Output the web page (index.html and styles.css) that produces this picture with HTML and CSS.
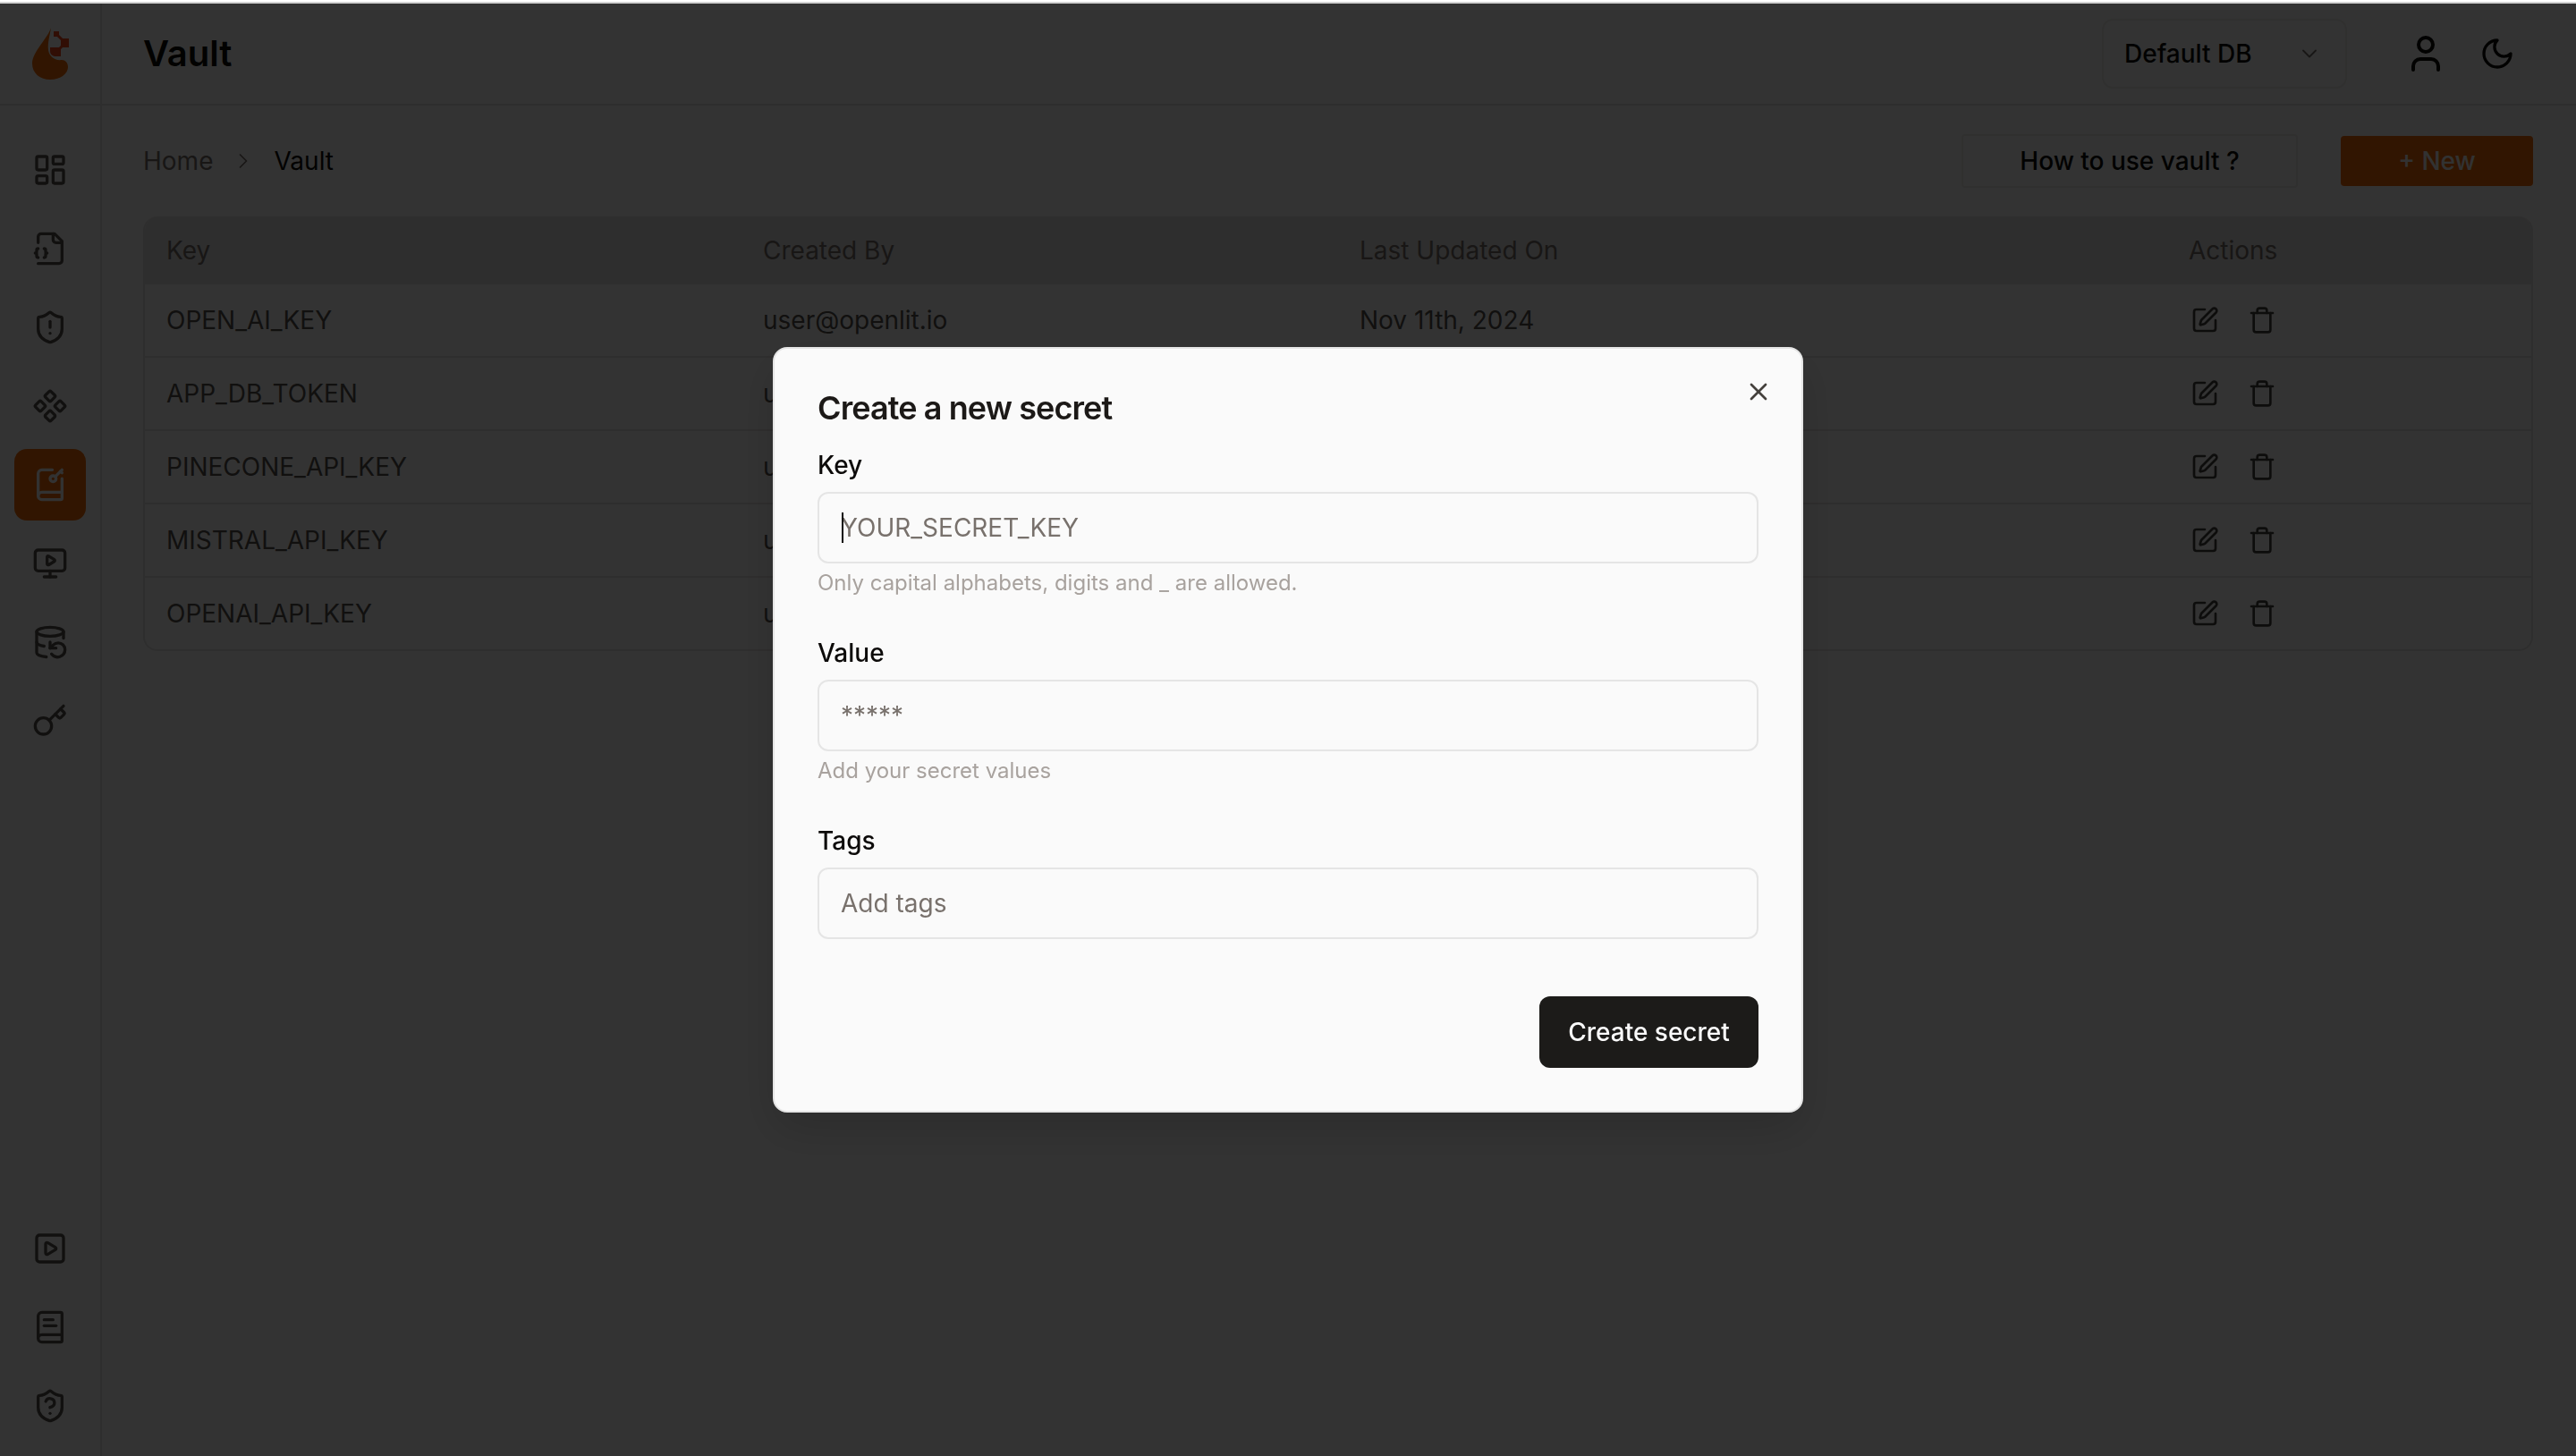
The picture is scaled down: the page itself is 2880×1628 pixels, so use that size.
FILE: index.html
```html
<!DOCTYPE html>
<html lang="en">
<head>
<meta charset="utf-8">
<title>Vault</title>
<link rel="stylesheet" href="styles.css">
</head>
<body>
<svg class="defs" width="0" height="0" aria-hidden="true">
  <symbol id="i-dash" viewBox="0 0 24 24"><rect width="7" height="9" x="3" y="3" rx="1"/><rect width="7" height="5" x="14" y="3" rx="1"/><rect width="7" height="9" x="14" y="12" rx="1"/><rect width="7" height="5" x="3" y="16" rx="1"/></symbol>
  <symbol id="i-file" viewBox="0 0 24 24"><path d="M4 22h14a2 2 0 0 0 2-2V7l-5-5H6a2 2 0 0 0-2 2v4"/><path d="M14 2v4a2 2 0 0 0 2 2h4"/><path d="M4 12a1 1 0 0 0-1 1v1a1 1 0 0 1-1 1 1 1 0 0 1 1 1v1a1 1 0 0 0 1 1"/><path d="M8 18a1 1 0 0 0 1-1v-1a1 1 0 0 1 1-1 1 1 0 0 1-1-1v-1a1 1 0 0 0-1-1"/></symbol>
  <symbol id="i-shield-alert" viewBox="0 0 24 24"><path d="M20 13c0 5-3.5 7.5-7.66 8.95a1 1 0 0 1-.67-.01C7.5 20.5 4 18 4 13V6a1 1 0 0 1 1-1c2 0 4.5-1.2 6.24-2.72a1.17 1.17 0 0 1 1.52 0C14.51 3.81 17 5 19 5a1 1 0 0 1 1 1z"/><path d="M12 8v4"/><path d="M12 16h.01"/></symbol>
  <symbol id="i-component" viewBox="0 0 24 24"><path d="M15.536 11.293a1 1 0 0 0 0 1.414l2.376 2.377a1 1 0 0 0 1.414 0l2.377-2.377a1 1 0 0 0 0-1.414l-2.377-2.377a1 1 0 0 0-1.414 0z"/><path d="M2.297 11.293a1 1 0 0 0 0 1.414l2.377 2.377a1 1 0 0 0 1.414 0l2.377-2.377a1 1 0 0 0 0-1.414L6.088 8.916a1 1 0 0 0-1.414 0z"/><path d="M8.916 17.912a1 1 0 0 0 0 1.415l2.377 2.376a1 1 0 0 0 1.414 0l2.377-2.376a1 1 0 0 0 0-1.415l-2.377-2.376a1 1 0 0 0-1.414 0z"/><path d="M8.916 4.674a1 1 0 0 0 0 1.414l2.377 2.376a1 1 0 0 0 1.414 0l2.377-2.376a1 1 0 0 0 0-1.414l-2.377-2.377a1 1 0 0 0-1.414 0z"/></symbol>
  <symbol id="i-book-key" viewBox="0 0 24 24"><path d="m19 3 1 1"/><path d="m20 2-4.5 4.5"/><path d="M20 7.898V21a1 1 0 0 1-1 1H6.5a1 1 0 0 1 0-5H20"/><path d="M4 19.5v-15A2.5 2.5 0 0 1 6.5 2h7"/><circle cx="14" cy="8" r="2"/></symbol>
  <symbol id="i-monitor" viewBox="0 0 24 24"><path d="M10 7.75a.75.75 0 0 1 1.142-.638l3.664 2.249a.75.75 0 0 1 0 1.278l-3.664 2.25a.75.75 0 0 1-1.142-.64z"/><path d="M12 17v4"/><path d="M8 21h8"/><rect x="2" y="3" width="20" height="14" rx="2"/></symbol>
  <symbol id="i-db" viewBox="0 0 24 24"><ellipse cx="12" cy="5" rx="9" ry="3"/><path d="M3 12a9 3 0 0 0 5 2.69"/><path d="M21 9.3V5"/><path d="M3 5v14a9 3 0 0 0 6.47 2.88"/><path d="M12 12v4h4"/><path d="M13 20a5 5 0 0 0 9-3 4.5 4.5 0 0 0-4.5-4.5c-1.33 0-2.54.54-3.41 1.41L12 16"/></symbol>
  <symbol id="i-key" viewBox="0 0 24 24"><path d="m15.5 7.5 2.3 2.3a1 1 0 0 0 1.4 0l2.1-2.1a1 1 0 0 0 0-1.4L19 4"/><path d="m21 2-9.6 9.6"/><circle cx="7.5" cy="15.5" r="5.5"/></symbol>
  <symbol id="i-square-play" viewBox="0 0 24 24"><rect x="3" y="3" width="18" height="18" rx="2"/><path d="M9 9.003a1 1 0 0 1 1.517-.859l4.997 2.997a1 1 0 0 1 0 1.718l-4.997 2.997A1 1 0 0 1 9 15.003z"/></symbol>
  <symbol id="i-book" viewBox="0 0 24 24"><path d="M4 19.5v-15A2.5 2.5 0 0 1 6.5 2H19a1 1 0 0 1 1 1v18a1 1 0 0 1-1 1H6.5a1 1 0 0 1 0-5H20"/><path d="M8 11h8"/><path d="M8 7h6"/></symbol>
  <symbol id="i-shield-q" viewBox="0 0 24 24"><path d="M20 13c0 5-3.5 7.5-7.66 8.95a1 1 0 0 1-.67-.01C7.5 20.5 4 18 4 13V6a1 1 0 0 1 1-1c2 0 4.5-1.2 6.24-2.72a1.17 1.17 0 0 1 1.52 0C14.51 3.81 17 5 19 5a1 1 0 0 1 1 1z"/><path d="M9.1 9a3 3 0 0 1 5.82 1c0 2-3 3-3 3"/><path d="M12 17h.01"/></symbol>
  <symbol id="i-edit" viewBox="0 0 24 24"><path d="M12 3H5a2 2 0 0 0-2 2v14a2 2 0 0 0 2 2h14a2 2 0 0 0 2-2v-7"/><path d="M18.375 2.625a1 1 0 0 1 3 3l-9.013 9.014a2 2 0 0 1-.853.505l-2.873.84a.5.5 0 0 1-.62-.62l.84-2.873a2 2 0 0 1 .506-.852z"/></symbol>
  <symbol id="i-trash" viewBox="0 0 24 24"><path d="M19 6v14a2 2 0 0 1-2 2H7a2 2 0 0 1-2-2V6"/><path d="M3 6h18"/><path d="M8 6V4a2 2 0 0 1 2-2h4a2 2 0 0 1 2 2v2"/></symbol>
</svg>

<div class="strip"></div>
<div class="app">
  <aside class="sidebar">
    <div class="logo-cell">
      <svg class="logo" viewBox="0 0 44 60" width="44" height="60" aria-hidden="true">
        <path class="logo-drop" d="M23 1C20 12 2 28 2 41C2 52 11 59 22 59C34 59 42 52 42 45C42 40 39 37 35 37C27 38 21 33 20 26C19 17 22 9 23 1Z"/>
        <path class="logo-node" d="M26 5h6v6h-6zM34 13h9v10h-9zM34 23V33H29C25 33 22 31 22 27V23Z"/>
        <path class="logo-link" d="M30 9 38 17M37 20 31 26"/>
      </svg>
    </div>
    <nav class="nav">
      <a class="nav-item"><svg class="ico-40"><use href="#i-dash"/></svg></a>
      <a class="nav-item"><svg class="ico-40"><use href="#i-file"/></svg></a>
      <a class="nav-item"><svg class="ico-40"><use href="#i-shield-alert"/></svg></a>
      <a class="nav-item"><svg class="ico-40"><use href="#i-component"/></svg></a>
      <a class="nav-item active"><svg class="ico-40"><use href="#i-book-key"/></svg></a>
      <a class="nav-item"><svg class="ico-40"><use href="#i-monitor"/></svg></a>
      <a class="nav-item"><svg class="ico-40"><use href="#i-db"/></svg></a>
      <a class="nav-item"><svg class="ico-40"><use href="#i-key"/></svg></a>
      <span class="nav-spacer"></span>
      <a class="nav-item"><svg class="ico-40"><use href="#i-square-play"/></svg></a>
      <a class="nav-item"><svg class="ico-40"><use href="#i-book"/></svg></a>
      <a class="nav-item"><svg class="ico-40"><use href="#i-shield-q"/></svg></a>
    </nav>
  </aside>

  <div class="content">
    <header class="header">
      <h1 class="title">Vault</h1>
      <div class="header-right">
        <div class="select">
          <span>Default DB</span>
          <svg class="chev" viewBox="0 0 24 24"><path d="m6 9 6 6 6-6"/></svg>
        </div>
        <div class="icon-btns">
          <button class="icon-btn"><svg class="ico-48" viewBox="0 0 24 24"><path d="M19 21v-2a4 4 0 0 0-4-4H9a4 4 0 0 0-4 4v2"/><circle cx="12" cy="7" r="4"/></svg></button>
          <button class="icon-btn"><svg class="ico-40" viewBox="0 0 24 24"><path d="M12 3a6 6 0 0 0 9 9 9 9 0 1 1-9-9Z"/></svg></button>
        </div>
      </div>
    </header>

    <main class="main">
      <div class="toolbar">
        <div class="crumbs">
          <span class="crumb-muted">Home</span>
          <svg class="crumb-sep" viewBox="0 0 24 24"><path d="m9 18 6-6-6-6"/></svg>
          <span class="crumb-current">Vault</span>
        </div>
        <div class="actions">
          <button class="btn-outline">How to use vault ?</button>
          <button class="btn-primary">+ New</button>
        </div>
      </div>

      <div class="table">
        <div class="row head"><div>Key</div><div>Created By</div><div>Last Updated On</div><div>Actions</div></div>
        <div class="row"><div>OPEN_AI_KEY</div><div>user@openlit.io</div><div>Nov 11th, 2024</div><div class="row-icons"><svg class="ico-32"><use href="#i-edit"/></svg><svg class="ico-32"><use href="#i-trash"/></svg></div></div>
        <div class="row"><div>APP_DB_TOKEN</div><div>user@openlit.io</div><div>Nov 11th, 2024</div><div class="row-icons"><svg class="ico-32"><use href="#i-edit"/></svg><svg class="ico-32"><use href="#i-trash"/></svg></div></div>
        <div class="row"><div>PINECONE_API_KEY</div><div>user@openlit.io</div><div>Nov 11th, 2024</div><div class="row-icons"><svg class="ico-32"><use href="#i-edit"/></svg><svg class="ico-32"><use href="#i-trash"/></svg></div></div>
        <div class="row"><div>MISTRAL_API_KEY</div><div>user@openlit.io</div><div>Nov 11th, 2024</div><div class="row-icons"><svg class="ico-32"><use href="#i-edit"/></svg><svg class="ico-32"><use href="#i-trash"/></svg></div></div>
        <div class="row"><div>OPENAI_API_KEY</div><div>user@openlit.io</div><div>Nov 11th, 2024</div><div class="row-icons"><svg class="ico-32"><use href="#i-edit"/></svg><svg class="ico-32"><use href="#i-trash"/></svg></div></div>
      </div>
    </main>
  </div>
</div>

<div class="overlay">
  <section class="modal">
    <button class="close" aria-label="Close"><svg viewBox="0 0 24 24"><path d="M18 6 6 18"/><path d="m6 6 12 12"/></svg></button>
    <h2 class="modal-title">Create a new secret</h2>
    <form class="form">
      <div class="field">
        <label class="label">Key</label>
        <div class="input-wrap">
          <input class="input" placeholder="YOUR_SECRET_KEY">
          <span class="caret"></span>
        </div>
        <p class="hint">Only capital alphabets, digits and _ are allowed.</p>
      </div>
      <div class="field">
        <label class="label">Value</label>
        <div class="input-wrap"><input class="input" placeholder="*****"></div>
        <p class="hint">Add your secret values</p>
      </div>
      <div class="field">
        <label class="label">Tags</label>
        <div class="input-wrap"><input class="input" placeholder="Add tags"></div>
      </div>
      <div class="form-foot"><button type="button" class="btn-dark">Create secret</button></div>
    </form>
  </section>
</div>
</body>
</html>
```

FILE: styles.css
```css
* { box-sizing: border-box; }
html, body { margin: 0; height: 100%; }
body {
  background: #fff;
  color: #0c0a09;
  font-family: Inter, "Liberation Sans", sans-serif;
  padding-top: 2px;
  overflow: hidden;
}
.defs { position: absolute; }
.strip { height: 2px; background: #d4d4d4; }

svg { fill: none; stroke: currentColor; stroke-width: 2; stroke-linecap: round; stroke-linejoin: round; display: block; flex: none; }
.ico-48 { width: 48px; height: 48px; }
.ico-40 { width: 40px; height: 40px; }
.ico-32 { width: 32px; height: 32px; }

.app { display: flex; height: 1624px; }

.sidebar { width: 114px; flex: none; display: flex; flex-direction: column; border-right: 2px solid #e7e5e4; }
.logo-cell { height: 114px; flex: none; border-bottom: 2px solid #e7e5e4; display: flex; align-items: center; justify-content: center; }
.logo { stroke: none; }
.logo-drop { fill: #f36c06; stroke: none; }
.logo-node { fill: #f4471d; stroke: none; }
.logo-link { fill: none; stroke: #f4471d; stroke-width: 3; stroke-linecap: butt; }
.nav { flex: 1; display: flex; flex-direction: column; gap: 8px; padding: 32px 16px 16px; }
.nav-spacer { flex: 1; }
.nav-item { width: 80px; height: 80px; display: flex; align-items: center; justify-content: center; color: #57534e; border-radius: 14px; }
.nav-item.active { background: #f36c06; color: #fafaf9; }

.content { flex: 1; min-width: 0; display: flex; flex-direction: column; }
.header { height: 114px; flex: none; border-bottom: 2px solid #e7e5e4; display: flex; align-items: center; justify-content: space-between; padding: 0 48px 0 46px; }
.title { margin: 0; font-size: 40px; font-weight: 600; line-height: 56px; }
.header-right { display: flex; align-items: center; gap: 48px; }
.select { width: 274px; height: 78px; border: 2px solid #eeedec; border-radius: 12px; display: flex; align-items: center; justify-content: space-between; padding: 0 26px 0 23px; font-size: 28px; font-weight: 500; }
.chev { width: 28px; height: 28px; color: #78716c; stroke-width: 1.6; }
.icon-btns { display: flex; }
.icon-btn { width: 80px; height: 80px; padding: 0; background: none; border: 0; color: inherit; display: flex; align-items: center; justify-content: center; }

.main { padding: 32px 48px 0 46px; display: flex; flex-direction: column; gap: 32px; }
.toolbar { display: flex; align-items: center; justify-content: space-between; height: 60px; }
.crumbs { display: flex; align-items: center; font-size: 28px; gap: 20px; }
.crumb-muted { color: #78716c; }
.crumb-sep { width: 28px; height: 28px; color: #78716c; stroke-width: 1.5; }
.actions { display: flex; align-items: center; gap: 48px; }
.btn-outline { width: 376px; height: 60px; background: #fff; border: 2px solid #eeedec; border-radius: 4px; font: 500 28px Inter, sans-serif; color: #0c0a09; }
.btn-primary { width: 215px; height: 56px; background: #f36c06; border: 0; border-radius: 4px; font: 500 28px Inter, sans-serif; color: #fafaf9; }

.table { border: 2px solid #e7e5e4; border-top: 0; border-radius: 16px; overflow: hidden; }
.row { display: grid; grid-template-columns: 667px 667px 927px 1fr; align-items: center; height: 82px; border-bottom: 2px solid #e7e5e4; font-size: 28px; color: #57534e; }
.row:last-child { border-bottom: 0; height: 80px; }
.row > div { padding-left: 24px; }
.row.head { height: 76px; background: #e7e5e4; border-bottom: 0; color: #78716c; }
.row > .row-icons { display: flex; gap: 32px; padding-left: 26px; color: #44403c; }

.overlay { position: fixed; left: 0; right: 0; top: 4px; bottom: 0; background: rgba(0,0,0,.8); display: flex; align-items: center; justify-content: center; }
.modal { position: relative; width: 1152px; height: 856px; padding: 48px 48px 0; background: #fafafa; border: 2px solid #e5e5e5; border-radius: 16px; box-shadow: 0 20px 50px rgba(0,0,0,.15); }
.close { position: absolute; right: 32px; top: 32px; width: 32px; height: 32px; padding: 0; background: none; border: 0; color: #44403c; }
.close svg { width: 32px; height: 32px; }
.modal-title { margin: 0; font-size: 36px; line-height: 36px; font-weight: 600; letter-spacing: -0.9px; color: #1c1917; }
.form { display: flex; flex-direction: column; margin-top: 26px; }
.field { display: flex; flex-direction: column; }
.field + .field { margin-top: 42px; }
.label { font-size: 28px; font-weight: 500; line-height: 40px; margin-bottom: 10px; color: #0c0a09; }
.input-wrap { position: relative; }
.input { display: block; width: 100%; height: 80px; padding: 0 24px; background: #fafafa; border: 2px solid #e5e5e5; border-radius: 12px; font: 400 28px Inter, sans-serif; color: #0c0a09; outline: none; }
.input::placeholder { color: #78716c; opacity: 1; }
.caret { position: absolute; left: 27px; top: 23px; width: 2px; height: 34px; background: #0c0a09; }
.hint { margin: 6px 0 0; font-size: 24px; line-height: 32px; color: #a8a29e; }
.form-foot { display: flex; justify-content: flex-end; margin-top: 64px; }
.btn-dark { width: 245px; height: 80px; background: #1c1b19; color: #fafafa; border: 0; border-radius: 12px; font: 500 28px Inter, sans-serif; }
```
